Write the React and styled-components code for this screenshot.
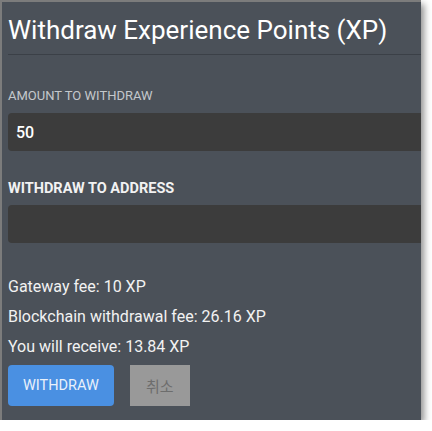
import React from 'react'
import styled, { createGlobalStyle } from 'styled-components'

const GlobalStyle = createGlobalStyle`
  html, body {
    margin: 0;
    padding: 0;
    background: #ffffff;
  }
  body {
    font-family: Roboto, 'Liberation Sans', 'Noto Sans CJK KR', sans-serif;
  }
`

const SPanel = styled.div`
  box-sizing: border-box;
  width: 421px;
  height: 420px;
  background-color: #4b5159;
  border-top: 2px solid #7c7c7c;
  border-left: 2px solid #7c7c7c;
  box-shadow: 3px 4px 7px rgba(0, 0, 0, 0.45);
  overflow: hidden;
  color: #ffffff;
`

const SInner = styled.div`
  width: 470px;
  padding: 13px 0 0 6px;
`

const STitle = styled.h1`
  margin: 0;
  font-size: 26px;
  line-height: 30px;
  font-weight: 400;
  color: #ffffff;
  padding-bottom: 9px;
  border-bottom: 1px solid #3b4047;
`

const SField = styled.div`
  display: flex;
  flex-direction: column;
  margin-top: ${(p) => p.top}px;
`

const SLabel = styled.label`
  font-size: ${(p) => (p.strong ? '14.5px' : '13px')};
  font-weight: ${(p) => (p.strong ? 700 : 400)};
  color: ${(p) => (p.strong ? '#f2f2f2' : '#c4c8cc')};
  line-height: ${(p) => (p.strong ? 16 : 15)}px;
  margin-bottom: ${(p) => (p.strong ? 8 : 10)}px;
`

const SInput = styled.div`
  box-sizing: border-box;
  height: 38px;
  background-color: #3c3c3c;
  border-radius: 4px;
  padding: 0 8px;
  display: flex;
  align-items: center;
  font-size: 16px;
  font-weight: 500;
  color: #ffffff;
`

const SFees = styled.div`
  margin-top: 29px;
  font-size: 16px;
  line-height: 30px;
  color: #f2f2f2;
`

const SActions = styled.div`
  display: flex;
  gap: 16px;
  margin-top: 3px;
`

const SButton = styled.button`
  box-sizing: border-box;
  height: 41px;
  border: none;
  font-family: inherit;
  font-size: ${(p) => (p.primary ? '14.5px' : '15px')};
  padding: ${(p) => (p.primary ? '0 15px' : '0 16px')};
  border-radius: ${(p) => (p.primary ? '4px' : '0')};
  background-color: ${(p) => (p.primary ? '#4a90e2' : '#999999')};
  color: ${(p) => (p.primary ? '#e9f1fb' : '#6d6d6d')};
  cursor: pointer;
`

const fees = [
  'Gateway fee: 10 XP',
  'Blockchain withdrawal fee: 26.16 XP',
  'You will receive: 13.84 XP',
]

export default function App() {
  return (
    <>
      <GlobalStyle />
      <SPanel>
        <SInner>
          <STitle>Withdraw Experience Points (XP)</STitle>
          <SField top={33}>
            <SLabel>AMOUNT TO WITHDRAW</SLabel>
            <SInput>50</SInput>
          </SField>
          <SField top={30}>
            <SLabel strong>WITHDRAW TO ADDRESS</SLabel>
            <SInput />
          </SField>
          <SFees>
            {fees.map((line, i) => (
              <div key={i}>{line}</div>
            ))}
          </SFees>
          <SActions>
            <SButton primary>WITHDRAW</SButton>
            <SButton>취소</SButton>
          </SActions>
        </SInner>
      </SPanel>
    </>
  )
}
